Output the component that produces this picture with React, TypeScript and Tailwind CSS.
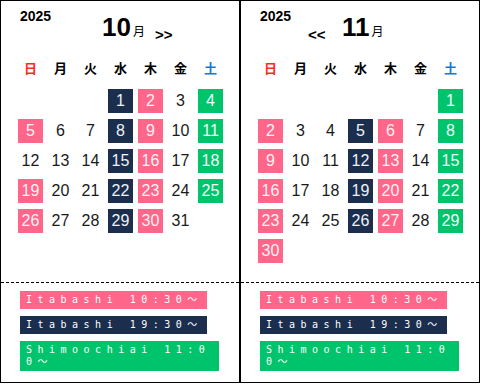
// Two-month schedule calendar (Oct / Nov 2025) with session legend

type Kind = 'pink' | 'navy' | 'green' | null;

const CELL_CLASS: Record<Exclude<Kind, null>, string> = {
  pink: 'bg-[#ff6689] text-[#fff2f5]',
  navy: 'bg-[#1b2e4d] text-[#eef2f8]',
  green: 'bg-[#00c46b] text-[#f2fff8]',
};

const WEEKDAYS = [
  { label: '日', color: 'text-[#ff2a1f]' },
  { label: '月', color: 'text-black' },
  { label: '火', color: 'text-black' },
  { label: '水', color: 'text-black' },
  { label: '木', color: 'text-black' },
  { label: '金', color: 'text-black' },
  { label: '土', color: 'text-[#1479d0]' },
];

const LEGEND = [
  { text: 'Itabashi 10:30～', cls: 'bg-[#ff6689] w-[187px]' },
  { text: 'Itabashi 19:30～', cls: 'bg-[#1b2e4d] w-[187px]' },
  { text: 'Shimoochiai 11:00～', cls: 'bg-[#00c46b] w-[199px]' },
];

function kindOf(month: number, day: number, dow: number): Kind {
  // Sunday 12 Oct had no session
  if (dow === 0) return month === 10 && day === 12 ? null : 'pink';
  if (dow === 3) return 'navy';
  if (dow === 4) return 'pink';
  if (dow === 6) return 'green';
  return null;
}

function MonthPanel({ month, firstDow, days, prev, next }: {
  month: number;
  firstDow: number;
  days: number;
  prev?: boolean;
  next?: boolean;
}) {
  const cells: (number | null)[] = [];
  for (let i = 0; i < firstDow; i++) cells.push(null);
  for (let d = 1; d <= days; d++) cells.push(d);

  return (
    <div className="flex h-[383px] w-[240px] flex-col border border-black bg-white">
      <div className="h-[281px] shrink-0 pl-[17px]">
        {/* Header: year, month, nav */}
        <div className="flex h-[40px] pl-[2px] font-['Liberation_Sans',sans-serif] font-bold text-black">
          <span className="mt-[7px] w-[48px] text-[14px] leading-4">2025</span>
          <div className="mt-[13px] flex h-[26px] items-baseline">
            <span className="w-[34px] translate-y-[4px] text-[15px] leading-[26px]">{prev ? '<<' : ''}</span>
            <span className="text-[26px] leading-[26px]">{month}</span>
            <span className="ml-[2px] font-['Noto_Sans_CJK_JP',sans-serif] text-[12px] font-normal leading-[26px]">月</span>
            {next && <span className="ml-[10px] translate-y-[4px] text-[15px] leading-[26px]">{'>>'}</span>}
          </div>
        </div>

        {/* Weekday labels */}
        <div className="mt-[17px] grid grid-cols-[repeat(7,25px)] gap-x-[5px] font-['Noto_Sans_CJK_JP',sans-serif] text-[13px] font-bold leading-5">
          {WEEKDAYS.map((w) => (
            <span key={w.label} className={`text-center ${w.color}`}>{w.label}</span>
          ))}
        </div>

        {/* Days */}
        <div className="mt-[11px] grid grid-cols-[repeat(7,25px)] gap-x-[5px] gap-y-[6px] font-['Liberation_Sans',sans-serif] text-[16px]">
          {cells.map((d, i) => {
            if (d === null) return <span key={`e${i}`} className="h-[24px]" />;
            const k = kindOf(month, d, i % 7);
            return (
              <span
                key={d}
                className={`flex h-[24px] items-center justify-center ${k ? CELL_CLASS[k] : 'text-[#1a1a1a]'}`}
              >
                {d}
              </span>
            );
          })}
        </div>
      </div>

      {/* Legend */}
      <div className="flex flex-1 flex-col gap-[7px] border-t border-dashed border-black pl-[19px] pt-[8px]">
        {LEGEND.map((l) => (
          <div
            key={l.text}
            className={`${l.cls} break-all py-[3px] pl-[6px] pr-[4px] font-['DejaVu_Sans_Mono','Noto_Sans_CJK_JP',monospace] text-[10px] leading-[12px] tracking-[5.5px] text-white`}
          >
            {l.text}
          </div>
        ))}
      </div>
    </div>
  );
}

export default function App() {
  return (
    <div className="flex h-[384px] w-[480px] bg-white">
      <MonthPanel month={10} firstDow={3} days={31} next />
      <MonthPanel month={11} firstDow={6} days={30} prev />
    </div>
  );
}
